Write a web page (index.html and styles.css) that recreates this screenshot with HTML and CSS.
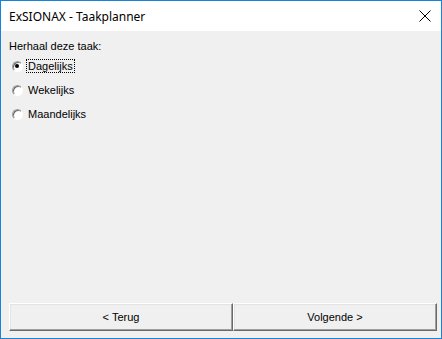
FILE: index.html
```html
<!DOCTYPE html>
<html lang="nl">

<head>
    <meta charset="UTF-8">
    <title>ExSIONAX - Taakplanner</title>
    <link rel="stylesheet" href="styles.css">
</head>

<body>
    <div class="window">
        <div class="titlebar">
            <span class="title">ExSIONAX - Taakplanner</span>
            <span class="close">
                <svg width="12" height="12" viewBox="0 0 12 12">
                    <path d="M0.5 0.5 L11.5 11.5 M11.5 0.5 L0.5 11.5" stroke="#000" stroke-width="1" fill="none" />
                </svg>
            </span>
        </div>
        <div class="content">
            <div class="question">Herhaal deze taak:</div>
            <div class="options">
                <label class="option"><span class="radio checked"></span><span class="label focus">Dagelijks</span></label>
                <label class="option"><span class="radio"></span><span class="label">Wekelijks</span></label>
                <label class="option"><span class="radio"></span><span class="label">Maandelijks</span></label>
            </div>
            <div class="buttons">
                <button class="btn back">&lt; Terug</button>
                <button class="btn next">Volgende &gt;</button>
            </div>
        </div>
    </div>
</body>

</html>
```

FILE: styles.css
```css
body {
    margin: 0;
    font-family: "DejaVu Sans", sans-serif;
}

.window {
    width: 442px;
    height: 339px;
    box-sizing: border-box;
    border: 1px solid #1883d7;
    display: flex;
    flex-direction: column;
    background: #f0f0f0;
}

.titlebar {
    height: 30px;
    background: #fff;
    display: flex;
    align-items: center;
    justify-content: space-between;
    padding: 0 9px 0 8px;
}

.title {
    font-family: "Noto Sans", sans-serif;
    font-size: 12px;
    color: #000;
}

.close {
    display: flex;
    width: 12px;
    height: 12px;
    margin-right: 1px;
}

.content {
    flex: 1;
    display: flex;
    flex-direction: column;
    padding: 9px 4px 7px 8px;
    font-family: "Liberation Sans", Arial, sans-serif;
    font-size: 11px;
    color: #000;
}

.question {
    height: 13px;
    line-height: 13px;
    margin-bottom: 6px;
}

.options {
    display: flex;
    flex-direction: column;
    gap: 10px;
    padding-left: 3px;
}

.option {
    display: flex;
    align-items: center;
    height: 14px;
}

.radio {
    width: 11px;
    height: 11px;
    box-sizing: border-box;
    border-radius: 50%;
    border: 1px solid;
    border-color: #a0a0a0 #fff #fff #a0a0a0;
    background: #fff;
    box-shadow: inset 1px 1px 0 #696969;
    position: relative;
    margin-right: 3px;
}

.radio.checked::after {
    content: "";
    position: absolute;
    left: 2px;
    top: 2px;
    width: 4px;
    height: 4px;
    border-radius: 50%;
    background: #000;
}

.label {
    padding: 0 1px;
    line-height: 12px;
    border: 1px dotted transparent;
}

.label.focus {
    border-color: #000;
}

.buttons {
    margin-top: auto;
    display: flex;
}

.btn {
    height: 28px;
    box-sizing: border-box;
    background: #f0f0f0;
    font-family: "Liberation Sans", Arial, sans-serif;
    font-size: 11px;
    color: #000;
    border: 1px solid;
    border-color: #fff #696969 #696969 #fff;
    box-shadow: inset -1px -1px 0 #a0a0a0, inset 1px 1px 0 #e3e3e3;
    padding: 0;
}

.back {
    width: 224px;
}

.next {
    width: 204px;
}
```
